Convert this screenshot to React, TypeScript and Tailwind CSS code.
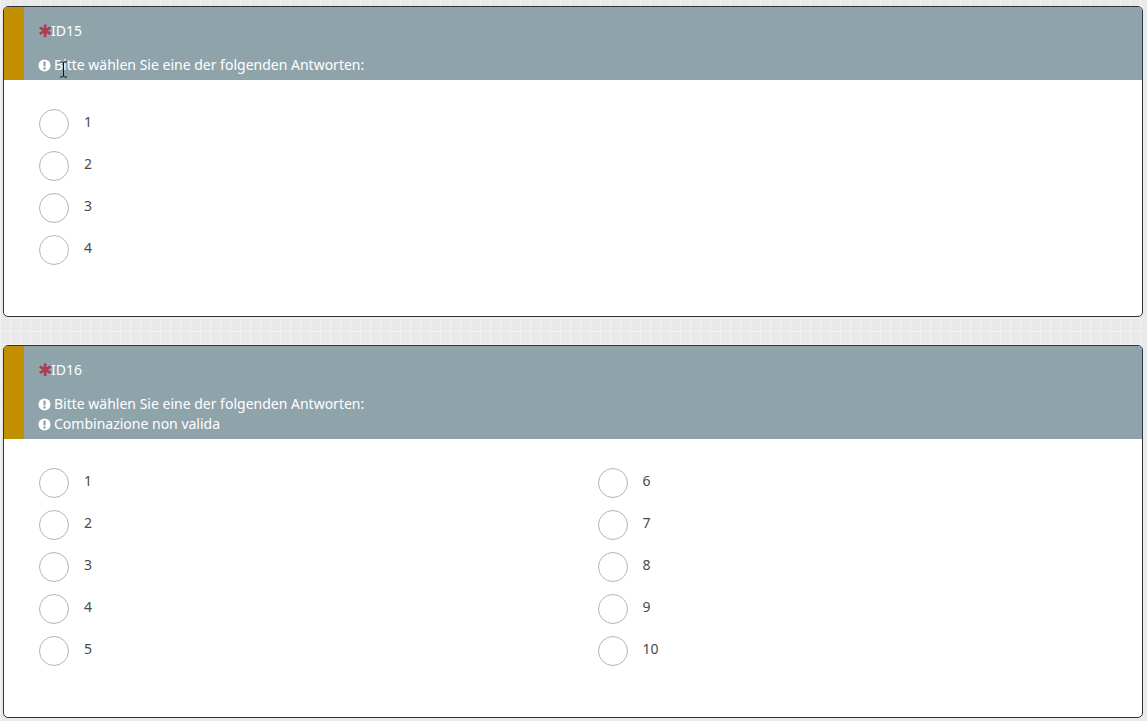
const NoticeIcon = () => (
  <svg viewBox="0 0 14 14" className="w-[13px] h-[13px] shrink-0">
    <circle cx="7" cy="7" r="6.5" fill="#ffffff" />
    <rect x="5.8" y="2.8" width="2.4" height="5.4" rx="0.8" fill="#8fa3ab" />
    <circle cx="7" cy="10.2" r="1.3" fill="#8fa3ab" />
  </svg>
);

const TextCursor = () => (
  <svg viewBox="0 0 9 17" className="absolute left-[59px] top-[61px] w-[9px] h-[17px]">
    <path d="M1 1h2.5l1 1 1-1H8M4.5 2v13M1 16h2.5l1-1 1 1H8" fill="none" stroke="#111111" strokeWidth="1" />
  </svg>
);

const Option = ({ label }: { label: number }) => (
  <div className="flex h-[42px] items-start">
    <div className="w-[30px] h-[30px] rounded-full border border-[#b5b5b5] bg-white shrink-0"></div>
    <span className="ml-[15px] mt-[3px] text-[14px] leading-[20px] text-[#4a4a48]">{label}</span>
  </div>
);

const Question = ({
  id,
  notices,
  columns,
  height,
}: {
  id: string;
  notices: string[];
  columns: number[][];
  height: string;
}) => (
  <section className={`${height} rounded-[5px] border border-[#2d363a] bg-white overflow-hidden`}>
    {/* Header */}
    <div className="flex bg-[#8fa3ab] text-white">
      <div className="w-5 shrink-0 bg-[#c28f00]"></div>
      <div className="pl-[14px] pt-[14px] pb-[5px]">
        <div className="flex items-center h-5 text-[14px] leading-5">
          <span className="font-['DejaVu_Sans'] text-[17px] font-bold text-[#a8404c] w-[13px]">✱</span>
          <span>{id}</span>
        </div>
        <div className="mt-[14px]">
          {notices.map((notice) => (
            <div key={notice} className="flex items-center gap-[3px] h-5 text-[14px] leading-5">
              <NoticeIcon />
              <span>{notice}</span>
            </div>
          ))}
        </div>
      </div>
    </div>

    {/* Answers */}
    <div className="grid grid-cols-2 pl-[35px] pt-[29px]">
      {columns.map((options, index) => (
        <div key={index} className={index === 1 ? "pl-[7px]" : ""}>
          {options.map((option) => (
            <Option key={option} label={option} />
          ))}
        </div>
      ))}
    </div>
  </section>
);

export default function App() {
  return (
    <div className="relative h-[721px] overflow-hidden px-[3px] pt-[6px] font-['Noto_Sans',sans-serif] bg-[#e9e9e9] bg-[linear-gradient(#f2f2f2_1px,transparent_1px),linear-gradient(90deg,#f2f2f2_1px,transparent_1px)] bg-[size:10px_13px] bg-[position:0px_6px]">
      <div className="w-[1140px] flex flex-col gap-[28px]">
        <Question
          id="ID15"
          notices={["Bitte wählen Sie eine der folgenden Antworten:"]}
          columns={[[1, 2, 3, 4]]}
          height="h-[311px]"
        />
        <Question
          id="ID16"
          notices={["Bitte wählen Sie eine der folgenden Antworten:", "Combinazione non valida"]}
          columns={[
            [1, 2, 3, 4, 5],
            [6, 7, 8, 9, 10],
          ]}
          height="h-[373px]"
        />
      </div>
      <TextCursor />
    </div>
  );
}
